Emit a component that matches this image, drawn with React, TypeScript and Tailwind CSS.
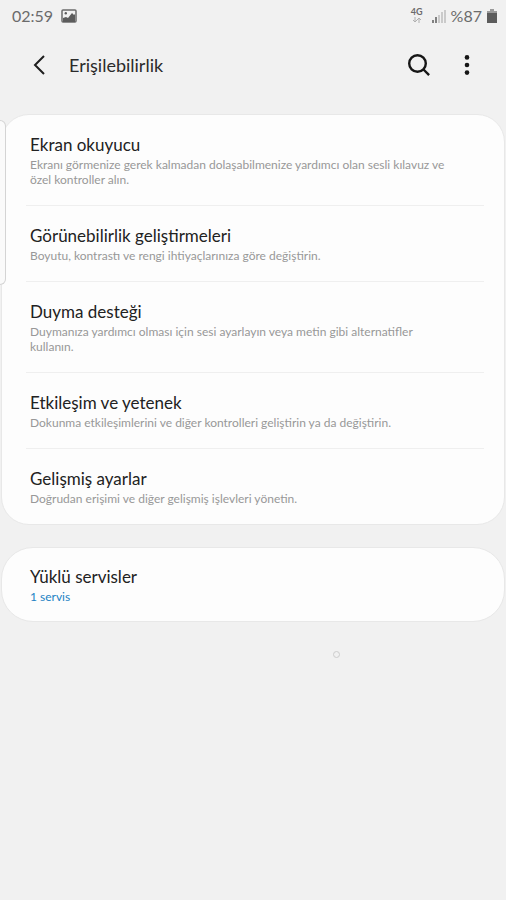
import { Fragment } from "react";

type Setting = {
  title: string;
  description: string;
};

const settings: Setting[] = [
  {
    title: "Ekran okuyucu",
    description:
      "Ekranı görmenize gerek kalmadan dolaşabilmenize yardımcı olan sesli kılavuz ve özel kontroller alın.",
  },
  {
    title: "Görünebilirlik geliştirmeleri",
    description: "Boyutu, kontrastı ve rengi ihtiyaçlarınıza göre değiştirin.",
  },
  {
    title: "Duyma desteği",
    description:
      "Duymanıza yardımcı olması için sesi ayarlayın veya metin gibi alternatifler kullanın.",
  },
  {
    title: "Etkileşim ve yetenek",
    description: "Dokunma etkileşimlerini ve diğer kontrolleri geliştirin ya da değiştirin.",
  },
  {
    title: "Gelişmiş ayarlar",
    description: "Doğrudan erişimi ve diğer gelişmiş işlevleri yönetin.",
  },
];

function StatusBar() {
  return (
    <div className="flex h-8 items-center justify-between pl-3 pr-2 text-base text-[#6b6b6b]">
      <div className="flex items-center gap-2">
        <span>02:59</span>
        <svg className="h-4 w-4" viewBox="0 0 16 16" aria-hidden="true">
          <rect x="1" y="2" width="14" height="12" rx="1" fill="none" stroke="#6b6b6b" strokeWidth="1.5" />
          <path d="M2 10 5 9l2 1 4-5 2 2 1-1v8H2z" fill="#5c5c5c" />
          <circle cx="4.8" cy="5.3" r="1.2" fill="#5c5c5c" />
        </svg>
      </div>
      <div className="flex items-center gap-1">
        <div className="flex flex-col items-center">
          <span className="text-[9px] font-bold leading-[8px]">4G</span>
          <svg className="h-2 w-3" viewBox="0 0 12 8" fill="none" stroke="#b0b0b0" aria-hidden="true">
            <path d="M4 1v5M2 4l2 2 2-2M8 7V2M6 4l2-2 2 2" />
          </svg>
        </div>
        <svg className="ml-1 h-4 w-4" viewBox="0 0 16 16" aria-hidden="true">
          <path d="M2 15v-3M5 15V9" stroke="#5c5c5c" strokeWidth="1.5" />
          <path d="M8 15V7M11 15V4M14 15V2" stroke="#bdbdbd" strokeWidth="1.5" />
        </svg>
        <span>%87</span>
        <svg className="h-4 w-3" viewBox="0 0 12 16" aria-hidden="true">
          <path d="M4 1h4v2h3v3H1V3h3z" fill="#9a9a9a" />
          <path d="M1 5h10v10H1z" fill="#5c5c5c" />
        </svg>
      </div>
    </div>
  );
}

function Header() {
  return (
    <header className="flex h-[66px] items-center pl-7 pr-[23px]">
      <button type="button" aria-label="Geri" className="p-1">
        <svg className="h-6 w-4" viewBox="0 0 16 24" fill="none" stroke="#1f1f1f" strokeWidth="2">
          <path d="M12 3 3 12l9 9" />
        </svg>
      </button>
      <h1 className="ml-[17px] flex-1 text-lg text-[#2b2b2b]">Erişilebilirlik</h1>
      <button type="button" aria-label="Ara" className="p-1">
        <svg className="h-6 w-6" viewBox="0 0 24 24" fill="none" stroke="#161616" strokeWidth="2.4">
          <circle cx="10.5" cy="10.5" r="8.3" />
          <path d="m16.5 16.5 5.6 5.6" />
        </svg>
      </button>
      <button type="button" aria-label="Diğer seçenekler" className="ml-4 p-1">
        <svg className="h-6 w-6" viewBox="0 0 24 24" fill="#161616">
          <circle cx="12" cy="4.4" r="2.3" />
          <circle cx="12" cy="12" r="2.3" />
          <circle cx="12" cy="19.6" r="2.3" />
        </svg>
      </button>
    </header>
  );
}

export default function App() {
  return (
    <div className="relative min-h-screen bg-[#f1f1f1] font-['Lato','Open_Sans',sans-serif]">
      <StatusBar />
      <Header />

      <main className="mt-4 space-y-[22px] pl-px pr-px">
        <section className="rounded-[28px] border border-[#e8e8e8] bg-[#fdfdfd]">
          {settings.map((item, i) => (
            <Fragment key={item.title}>
              {i > 0 && <hr className="ml-6 mr-5 border-[#efefef]" />}
              <button type="button" className="block w-full py-[18px] pl-7 pr-14 text-left">
                <span className="block text-[17px] leading-6 text-[#222222]">{item.title}</span>
                <span className="block text-xs leading-[15px] text-[#989898]">{item.description}</span>
              </button>
            </Fragment>
          ))}
        </section>

        <section className="rounded-[32px] border border-[#e8e8e8] bg-[#fdfdfd]">
          <button type="button" className="block w-full px-7 pb-4 pt-[17px] text-left">
            <span className="block text-[17px] leading-6 text-[#222222]">Yüklü servisler</span>
            <span className="block text-xs leading-4 text-[#1c82c4]">1 servis</span>
          </button>
        </section>
      </main>

      {/* Edge panel handle */}
      <div className="absolute left-0 top-[120px] h-[165px] w-1.5 rounded-r-md border border-l-0 border-[#d4d4d4] bg-[#fafafa]" />

      {/* Pointer */}
      <div className="absolute left-[333px] top-[651px] h-[7px] w-[7px] rounded-full border border-[#cccccc]" />
    </div>
  );
}
